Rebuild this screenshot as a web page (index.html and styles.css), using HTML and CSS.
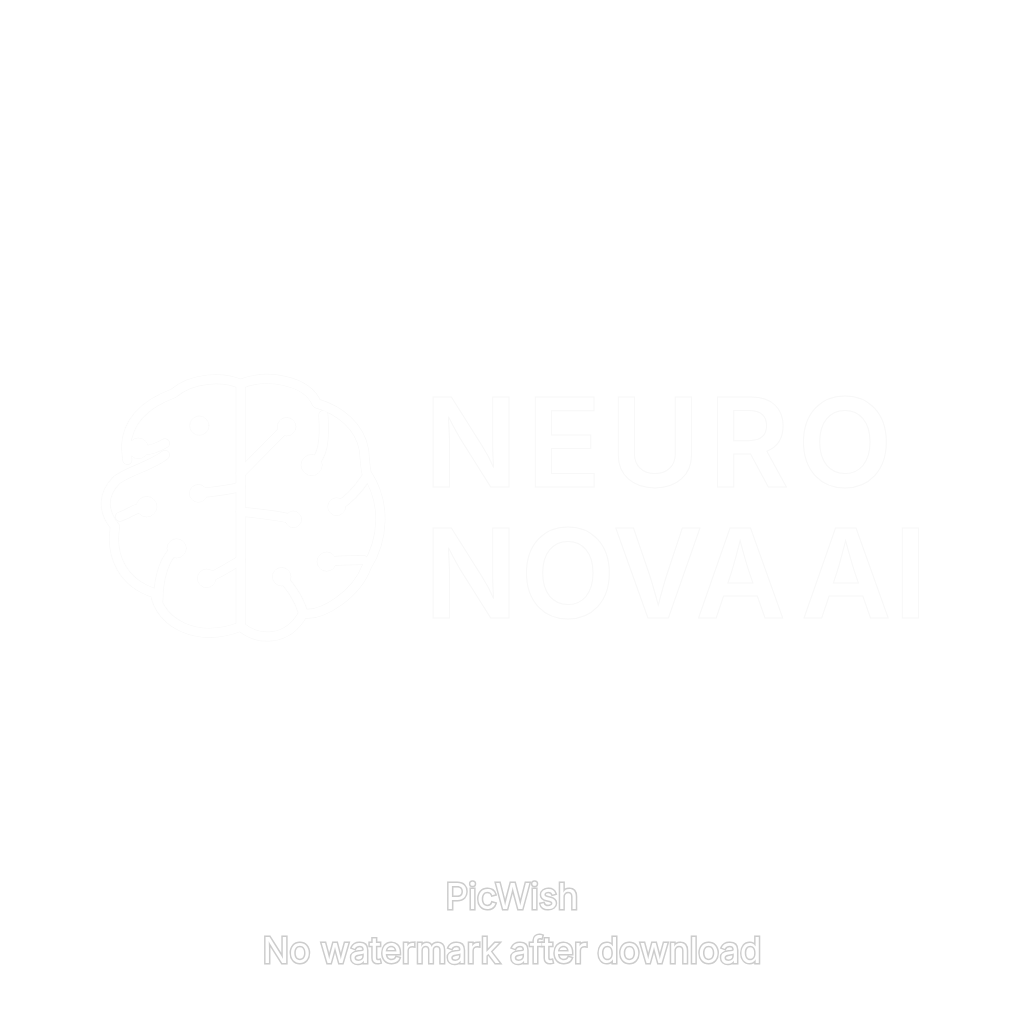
FILE: index.html
```html
<!DOCTYPE html>
<html lang="en">
<head>
<meta charset="utf-8">
<title>Neuro Nova AI</title>
<link rel="stylesheet" href="styles.css">
</head>
<body>
<main class="page">
  <section class="logo">
    <svg class="brain" viewBox="0 0 930 900" width="310" height="300" aria-hidden="true">
      <defs>
        <g id="lines">
          <path d="M452 80V800"/>
          <path d="M452 72C400 50 310 50 250 100C170 130 112 180 108 260L112 300"/>
          <path d="M225 285C180 320 120 330 80 360C40 400 35 450 75 500C60 590 100 670 195 700C210 790 320 850 452 800"/>
          <path d="M452 72C530 40 650 60 680 130C750 150 810 200 822 270C825 300 825 320 830 340C890 430 880 540 830 620C800 700 700 770 640 760C590 850 500 840 452 800"/>
          <path d="M145 270C170 275 200 265 225 250"/>
          <path d="M90 470C120 460 140 440 170 440"/>
          <path d="M260 565C225 590 205 650 205 720"/>
          <path d="M325 400C360 395 400 395 452 380"/>
          <path d="M350 655C380 645 410 625 452 600"/>
          <path d="M452 340L590 200"/>
          <path d="M452 455C500 460 560 465 610 478"/>
          <path d="M575 650C600 680 625 710 640 760"/>
          <path d="M700 165C705 240 700 290 665 315"/>
          <path d="M740 440C770 425 800 395 830 350"/>
          <path d="M710 605C750 600 790 600 820 600"/>
        </g>
        <g id="dots">
          <circle cx="145" cy="265" r="30"/><circle cx="170" cy="440" r="30"/><circle cx="260" cy="565" r="28"/>
          <circle cx="325" cy="400" r="26"/><circle cx="350" cy="655" r="27"/><circle cx="590" cy="200" r="27"/>
          <circle cx="610" cy="478" r="24"/><circle cx="575" cy="650" r="27"/><circle cx="665" cy="315" r="31"/>
          <circle cx="740" cy="440" r="26"/><circle cx="710" cy="605" r="28"/>
        </g>
      </defs>
      <use class="edge" href="#lines"/>
      <use class="dot-edge" href="#dots"/>
      <use class="core" href="#lines"/>
      <use class="dot-core" href="#dots"/>
      <circle class="dot-solo" cx="328" cy="197" r="29"/>
    </svg>
    <h1 class="name"><span class="first">NEURO</span><span class="second">NOVA AI</span></h1>
  </section>
  <footer class="mark">
    <p>PicWish</p>
    <p>No watermark after download</p>
  </footer>
</main>
</body>
</html>
```

FILE: styles.css
```css
html, body {
  margin: 0;
  background: #fff;
}
.page {
  width: 1024px;
  height: 1024px;
  display: flex;
  flex-direction: column;
  overflow: hidden;
}
.logo {
  display: flex;
  align-items: flex-start;
  gap: 24px;
  padding: 360px 0 0 90px;
}
.brain {
  flex: none;
  fill: none;
  stroke-linecap: round;
  stroke-linejoin: round;
}
.edge {
  fill: none;
  stroke: #f9f9f9;
  stroke-width: 30px;
}
.dot-edge {
  fill: #f9f9f9;
  stroke: #f9f9f9;
  stroke-width: 3px;
}
.core {
  fill: none;
  stroke: #fff;
  stroke-width: 26px;
}
.dot-core {
  fill: #fff;
  stroke: none;
}
.dot-solo {
  fill: #fff;
  stroke: #f9f9f9;
  stroke-width: 2px;
}
.name {
  margin: 0;
  padding-top: 17px;
  display: flex;
  flex-direction: column;
  font: 600 124px/131px Inter, "Liberation Sans", sans-serif;
  color: #fff;
  -webkit-text-stroke: 1px #f8f8f8;
  white-space: nowrap;
}
.first {
  letter-spacing: 8px;
}
.second {
  letter-spacing: 2px;
  word-spacing: -20px;
}
.mark {
  margin-top: 210px;
  text-align: center;
  font: 400 35.5px/54px Inter, "Liberation Sans", sans-serif;
  color: #fff;
  -webkit-text-stroke: 3px #cccccc;
  paint-order: stroke fill;
  will-change: transform;
}
.mark p {
  margin: 0;
}
```
